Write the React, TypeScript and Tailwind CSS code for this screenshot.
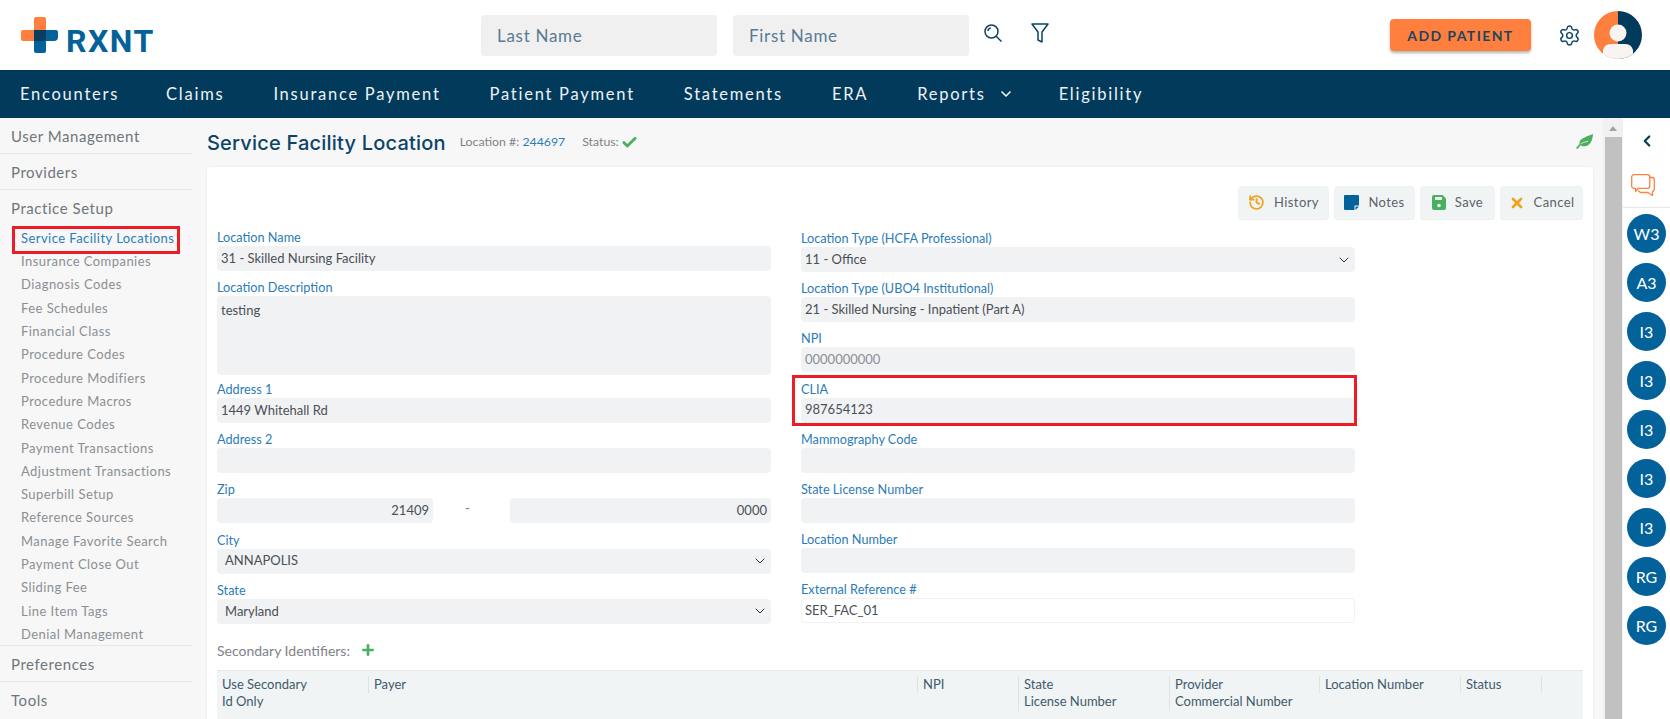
import { ChevronDown, ChevronLeft, History, Settings, X, Check, Plus } from "lucide-react"

const navItems = ["Encounters", "Claims", "Insurance Payment", "Patient Payment", "Statements", "ERA"]

const setupItems = [
  "Insurance Companies",
  "Diagnosis Codes",
  "Fee Schedules",
  "Financial Class",
  "Procedure Codes",
  "Procedure Modifiers",
  "Procedure Macros",
  "Revenue Codes",
  "Payment Transactions",
  "Adjustment Transactions",
  "Superbill Setup",
  "Reference Sources",
  "Manage Favorite Search",
  "Payment Close Out",
  "Sliding Fee",
  "Line Item Tags",
  "Denial Management",
]

const users = ["W3", "A3", "I3", "I3", "I3", "I3", "I3", "RG", "RG"]

function Logo() {
  return (
    <div className="ml-[21px] flex h-[36px] w-[180px] items-end gap-[8px]">
      <svg width="37" height="36" viewBox="0 0 37 36">
        <path d="M13 2a2 2 0 0 1 2-2h8a2 2 0 0 1 2 2v11H13zM0 15a2 2 0 0 1 2-2h23v11H2a2 2 0 0 1-2-2z" fill="#ff7f3f" />
        <path d="M13 13h22a2 2 0 0 1 2 2v5a4 4 0 0 1-4 4h-8v10a2 2 0 0 1-2 2h-8a2 2 0 0 1-2-2z" fill="#04629b" />
        <path d="M13 13h12v7a4 4 0 0 1-4 4h-8z" fill="#0b3d5e" />
      </svg>
      <span className="font-['Roboto',sans-serif] text-[32px] font-bold leading-[23px] tracking-[1.500px] text-[#04629b]">RXNT</span>
    </div>
  )
}

function Avatar() {
  return (
    <svg width="48" height="48" viewBox="0 0 48 48">
      <defs>
        <clipPath id="avatar-clip">
          <circle cx="24" cy="24" r="24" />
        </clipPath>
      </defs>
      <g clipPath="url(#avatar-clip)">
        <rect width="24" height="48" fill="#ff7f3f" />
        <rect x="24" width="24" height="48" fill="#023a5c" />
        <circle cx="24" cy="22" r="8.500" fill="#f7f4f2" />
        <path d="M9 48V39a8 8 0 0 1 8-6h14a8 8 0 0 1 8 6v9z" fill="#f7f4f2" />
      </g>
    </svg>
  )
}

function Header() {
  return (
    <header className="flex h-[70px] items-center bg-white">
      <Logo />
      <div className="ml-[280px] flex gap-[16px]">
        <input
          placeholder="Last Name"
          className="h-[41px] w-[236px] rounded-[4px] bg-[#f0f0f0] px-[16px] text-[17px] tracking-[0.7px] text-[#5a7a92] placeholder:text-[#5a7a92] outline-none"
        />
        <input
          placeholder="First Name"
          className="h-[41px] w-[236px] rounded-[4px] bg-[#f0f0f0] px-[16px] text-[17px] tracking-[0.7px] text-[#5a7a92] placeholder:text-[#5a7a92] outline-none"
        />
      </div>
      <svg width="18" height="18" viewBox="0 0 18 18" fill="none" stroke="#0b4468" strokeWidth="1.500" className="mb-[4px] ml-[15px]">
        <circle cx="7.500" cy="7.500" r="6.500" />
        <path d="M12.200 12.200L17.500 17.500M3.800 7a3.500 3.500 0 0 1 3-3" />
      </svg>
      <svg width="18" height="20" viewBox="0 0 18 20" fill="none" stroke="#0b4468" strokeWidth="1.500" strokeLinejoin="round" className="mb-[4px] ml-[29px]">
        <path d="M1 1h16l-6 8v10l-4-2V9z" />
      </svg>
      <div className="ml-auto flex items-center pr-[28px]">
        <button className="h-[32px] w-[141px] rounded-[4px] bg-[#ff7f3f] text-[14px] font-bold tracking-[1.4px] text-[#1c4560] shadow-[0_2px_3px_rgba(0,0,0,0.3)]">
          ADD PATIENT
        </button>
        <Settings size={23} strokeWidth={1.5} className="ml-[27px] text-[#0b4468]" />
        <span className="ml-[13px]">
          <Avatar />
        </span>
      </div>
    </header>
  )
}

function Nav() {
  return (
    <nav className="flex h-[48px] items-center gap-[49px] bg-[#023a5c] pl-[20px] text-[16.500px] tracking-[1.750px] text-[#eef2f5]">
      {navItems.map((item, i) => (
        <span key={item} className={i === 0 ? "-mr-[2px]" : ""}>{item}</span>
      ))}
      <span className="flex items-center gap-[12px]">
        Reports <ChevronDown size={16} strokeWidth={2.5} />
      </span>
      <span className="-ml-[4px]">Eligibility</span>
    </nav>
  )
}

function SectionTitle({ label, border = true, lift = false }: { label: string; border?: boolean; lift?: boolean }) {
  return (
    <div className={`flex h-[36px] items-center pl-[11px] text-[15px] tracking-[0.55px] text-[#6f767b] ${border ? "border-b border-[#e8e8e8]" : ""} ${lift ? "pt-[1px]" : ""}`}>
      {label}
    </div>
  )
}

function Sidebar() {
  return (
    <aside className="w-[192px] shrink-0 bg-[#f7f7f7]">
      <SectionTitle label="User Management" lift />
      <SectionTitle label="Providers" lift />
      <div className="flex h-[37px] items-center pb-[1px] pl-[11px] text-[15px] tracking-[0.55px] text-[#6f767b]">Practice Setup</div>
      <div className="relative flex h-[23.300px] items-center pl-[21px] text-[13px] tracking-[0.45px] text-[#2b7cb8]">
        Service Facility Locations
        <span className="absolute left-[12px] top-[-1px] h-[28px] w-[168px] border-[3px] border-[#ee1c25]" />
      </div>
      {setupItems.map((item) => (
        <div key={item} className="flex h-[23.300px] items-center pl-[21px] text-[13px] tracking-[0.45px] text-[#8a8f94]">
          {item}
        </div>
      ))}
      <div className="-mt-[1px] border-t border-[#e8e8e8]">
        <SectionTitle label="Preferences" />
        <SectionTitle label="Tools" border={false} />
      </div>
    </aside>
  )
}

function Field({ label, children, gap = "mb-[8.200px]" }: { label: string; children: React.ReactNode; gap?: string }) {
  return (
    <div className={gap}>
      <div className="h-[17px] text-[12.700px] leading-[17px] text-[#2b7cb8]">{label}</div>
      {children}
    </div>
  )
}

function TextBox({ value, muted, right, white }: { value?: string; muted?: boolean; right?: boolean; white?: boolean }) {
  return (
    <div
      className={`flex h-[25px] items-center rounded-[4px] text-[13px] ${right ? "justify-end" : ""} ${muted ? "text-[#8a8f94]" : "text-[#4a5055]"} ${white ? "border border-[#f1f2f4] bg-white px-[3px]" : "bg-[#f1f2f4] px-[4px]"}`}
    >
      {value}
    </div>
  )
}

function SelectBox({ value, chevron = true, inset = "pl-[8px]" }: { value: string; chevron?: boolean; inset?: string }) {
  return (
    <div className={`flex h-[25px] items-center justify-between rounded-[4px] bg-[#f1f2f4] pr-[3px] text-[13px] text-[#4a5055] ${inset}`}>
      {value}
      {chevron && <ChevronDown size={16} strokeWidth={1.5} className="text-[#333]" />}
    </div>
  )
}

function ActionButton({ icon, label, width }: { icon: React.ReactNode; label: string; width: string }) {
  return (
    <button className={`flex h-[33px] items-center justify-center gap-[9px] rounded-[4px] bg-[#f1f4f5] text-[13px] tracking-[0.4px] text-[#5b6368] shadow-[0_1px_1px_rgba(0,0,0,0.08)] ${width}`}>
      {icon}
      {label}
    </button>
  )
}

function NotesIcon() {
  return (
    <svg width="15" height="15" viewBox="0 0 15 15">
      <path d="M0 1a1 1 0 0 1 1-1h13a1 1 0 0 1 1 1v9.500h-4.500V15H1a1 1 0 0 1-1-1z" fill="#04629b" />
      <path d="M11.500 15v-3.500H15z" fill="#04629b" />
    </svg>
  )
}

function SaveIcon() {
  return (
    <svg width="14" height="15" viewBox="0 0 14 15">
      <path d="M0 2a2 2 0 0 1 2-2h8.500L14 3.500V13a2 2 0 0 1-2 2H2a2 2 0 0 1-2-2z" fill="#4caf5f" />
      <rect x="3" y="2" width="7" height="3" fill="#e8f5ea" />
      <circle cx="7" cy="10.500" r="1.800" fill="#e8f5ea" />
    </svg>
  )
}

function LeafIcon() {
  return (
    <svg width="17" height="15" viewBox="0 0 17 15">
      <path d="M17 0c-.5 7-3 12-8.500 12.300-1.800.1-3-.3-4-1L1.500 15 0 14l3.500-4C3 5 8 3.500 17 0z" fill="#4caf5f" />
      <path d="M4.500 10c2.200-1.500 4.500-2.300 7.500-2.600" stroke="#e8f5ea" strokeWidth="0.800" fill="none" />
    </svg>
  )
}

function ChatIcon() {
  return (
    <svg width="24" height="23" viewBox="0 0 24 23" fill="none" stroke="#ff7f3f" strokeWidth="1.300" strokeLinejoin="round" className="mt-[24px] mr-[7px]">
      <path d="M3 .7h13.500a2.300 2.300 0 0 1 2.300 2.300v9a2.300 2.300 0 0 1-2.300 2.300H7L4.500 17.500V14.300H3A2.300 2.300 0 0 1 .7 12V3A2.300 2.300 0 0 1 3 .7z" />
      <path d="M18.800 3.500h2.200a2.300 2.300 0 0 1 2.300 2.300v9.500a2.300 2.300 0 0 1-1.800 2.200v4l-4.500-3H9.500L7 16.500" />
    </svg>
  )
}

function TableHeader() {
  const cols = [
    { w: "w-[151px]", a: "Use Secondary", b: "Id Only" },
    { w: "w-[549px]", a: "Payer" },
    { w: "w-[101px]", a: "NPI" },
    { w: "w-[151px]", a: "State", b: "License Number" },
    { w: "w-[150px]", a: "Provider", b: "Commercial Number" },
    { w: "w-[141px]", a: "Location Number" },
    { w: "w-[81px]", a: "Status" },
    { w: "w-[30px]", a: "" },
  ]
  return (
    <div className="flex h-[60px] items-start border-t border-[#e6e9ea] bg-[#f1f4f5] pt-[5px] text-[13px] leading-[17.500px] text-[#3f5a6b]">
      {cols.map((col, i) => (
        <div key={i} className={`${col.w} ${i > 0 ? "border-l border-[#dfe3e5]" : ""} ${col.b ? "h-[35px]" : "h-[17.500px]"} shrink-0 pl-[5px]`}>
          <div>{col.a}</div>
          {col.b && <div>{col.b}</div>}
        </div>
      ))}
    </div>
  )
}

function FormCard() {
  return (
    <section className="rounded-t-[4px] bg-white px-[10px] pt-[19px] shadow-[0_0_3px_rgba(0,0,0,0.08)]">
      <div className="mb-[10px] flex justify-end gap-[5px]">
        <ActionButton icon={<History size={17} strokeWidth={2.5} className="text-[#f0a31c]" />} label="History" width="w-[91px]" />
        <ActionButton icon={<NotesIcon />} label="Notes" width="w-[81px]" />
        <ActionButton icon={<SaveIcon />} label="Save" width="w-[75px]" />
        <ActionButton icon={<X size={16} strokeWidth={4} className="text-[#f0a31c]" />} label="Cancel" width="w-[83px]" />
      </div>
      <div className="flex gap-[30px]">
        <div className="w-[554px]">
          <Field label="Location Name" gap="mb-[8px]"><TextBox value="31 - Skilled Nursing Facility" /></Field>
          <Field label="Location Description" gap="mb-[6px]">
            <div className="h-[79px] rounded-[4px] bg-[#f1f2f4] px-[4px] pt-[5px] text-[13px] text-[#4a5055]">testing</div>
          </Field>
          <Field label="Address 1"><TextBox value="1449 Whitehall Rd" /></Field>
          <Field label="Address 2"><TextBox /></Field>
          <Field label="Zip">
            <div className="flex items-center">
              <div className="w-[216px]"><TextBox value="21409" right /></div>
              <span className="mb-[4px] ml-[32px] w-[45px] text-[13px] text-[#6f767b]">-</span>
              <div className="w-[261px]"><TextBox value="0000" right /></div>
            </div>
          </Field>
          <Field label="City"><SelectBox value="ANNAPOLIS" /></Field>
          <Field label="State"><SelectBox value="Maryland" /></Field>
        </div>
        <div className="relative w-[554px] pt-[1px]">
          <Field label="Location Type (HCFA Professional)"><SelectBox value="11 - Office" inset="pl-[4px]" /></Field>
          <Field label="Location Type (UBO4 Institutional)"><SelectBox value="21 - Skilled Nursing - Inpatient (Part A)" chevron={false} inset="pl-[4px]" /></Field>
          <Field label="NPI"><TextBox value="0000000000" muted /></Field>
          <Field label="CLIA"><TextBox value="987654123" /></Field>
          <Field label="Mammography Code"><TextBox /></Field>
          <Field label="State License Number"><TextBox /></Field>
          <Field label="Location Number"><TextBox /></Field>
          <Field label="External Reference #"><TextBox value="SER_FAC_01" white /></Field>
          <span className="absolute left-[-9px] top-[146px] h-[51px] w-[565px] border-[3px] border-[#ee1c25]" />
        </div>
      </div>
      <div className="mb-[5px] mt-[4px] flex h-[29px] items-center gap-[10px] text-[14px] text-[#7d8388]">
        Secondary Identifiers:
        <Plus size={16} strokeWidth={4} className="text-[#4caf5f]" />
      </div>
      <TableHeader />
    </section>
  )
}

function Scrollbar() {
  return (
    <div className="flex w-[20px] shrink-0 flex-col items-center bg-[#f1f1f1]">
      <div className="mt-[8px] h-0 w-0 border-x-[4px] border-b-[5px] border-x-transparent border-b-[#a3a3a3]" />
      <div className="mt-[6px] w-[17px] flex-1 bg-[#c1c1c1]" />
    </div>
  )
}

function RightPanel() {
  return (
    <aside className="flex w-[47px] shrink-0 flex-col items-center bg-white">
      <ChevronLeft size={18} strokeWidth={3} className="mt-[14px] text-[#0b3d4e]" />
      <span className="flex justify-center">
        <ChatIcon />
      </span>
      <div className="mb-[6px] mt-[10px] w-full border-t border-[#e8e8e8]" />
      <div className="flex flex-col gap-[10px]">
        {users.map((u, i) => (
          <div key={i} className="flex h-[39px] w-[39px] items-center justify-center rounded-full bg-[#04629b] text-[16px] text-white">
            {u}
          </div>
        ))}
      </div>
    </aside>
  )
}

export default function App() {
  return (
    <div className="flex h-[719px] w-[1670px] flex-col overflow-hidden bg-white font-['Lato',sans-serif]">
      <Header />
      <Nav />
      <div className="flex min-h-0 flex-1">
        <Sidebar />
        <main className="min-w-0 flex-1 overflow-hidden bg-[#f7f7f7] pl-[15px] pr-[10px]">
          <div className="flex h-[49px] items-center">
            <h1 className="font-['Inter',sans-serif] text-[20px] font-medium tracking-[0.2px] text-[#0b4468]">Service Facility Location</h1>
            <span className="ml-[14px] text-[12.300px] text-[#7d8388]">
              Location #: <span className="text-[#2b7cb8]">244697</span>
            </span>
            <span className="ml-[17px] flex items-center gap-[2px] text-[12.300px] text-[#7d8388]">
              Status: <Check size={17} strokeWidth={4} className="text-[#4caf5f]" />
            </span>
            <span className="mb-[2px] ml-auto">
              <LeafIcon />
            </span>
          </div>
          <FormCard />
        </main>
        <Scrollbar />
        <RightPanel />
      </div>
    </div>
  )
}
